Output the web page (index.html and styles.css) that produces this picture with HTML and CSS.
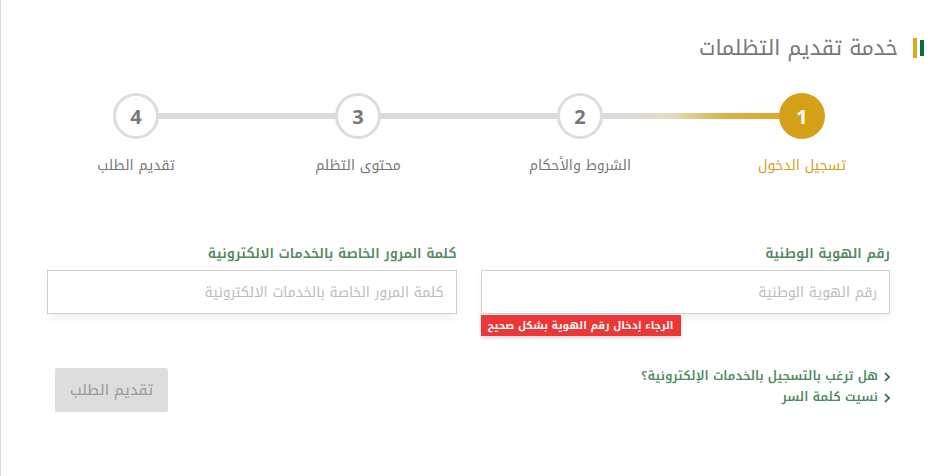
FILE: index.html
```html
<!DOCTYPE html>
<html lang="ar" dir="rtl">
<head>
<meta charset="utf-8">
<title>خدمة تقديم التظلمات</title>
<link rel="stylesheet" href="styles.css">
</head>
<body>
<div class="page">
  <div class="header">
    <span class="bar bar-green"></span>
    <span class="bar bar-gold"></span>
    <h1 class="title">خدمة تقديم التظلمات</h1>
  </div>

  <div class="steps">
    <div class="step step-active">
      <div class="circle">1</div>
      <div class="step-label">تسجيل الدخول</div>
    </div>
    <div class="step">
      <div class="circle">2</div>
      <div class="step-label">الشروط والأحكام</div>
    </div>
    <div class="step">
      <div class="circle">3</div>
      <div class="step-label">محتوى التظلم</div>
    </div>
    <div class="step step-last">
      <div class="circle">4</div>
      <div class="step-label">تقديم الطلب</div>
    </div>
  </div>

  <div class="form">
    <div class="field">
      <label class="field-label">رقم الهوية الوطنية</label>
      <div class="input-wrap">
        <input class="input" type="text" placeholder="رقم الهوية الوطنية">
        <div class="error">الرجاء إدخال رقم الهوية بشكل صحيح</div>
      </div>
    </div>
    <div class="field">
      <label class="field-label">كلمة المرور الخاصة بالخدمات الالكترونية</label>
      <div class="input-wrap">
        <input class="input" type="password" placeholder="كلمة المرور الخاصة بالخدمات الالكترونية">
      </div>
    </div>
  </div>

  <div class="actions">
    <div class="links">
      <a class="link" href="#"><svg class="chev" viewBox="0 0 6 10" width="6" height="10"><path d="M1 1 L5 5 L1 9" fill="none" stroke="currentColor" stroke-width="1.6"/></svg>هل ترغب بالتسجيل بالخدمات الإلكترونية؟</a>
      <a class="link" href="#"><svg class="chev" viewBox="0 0 6 10" width="6" height="10"><path d="M1 1 L5 5 L1 9" fill="none" stroke="currentColor" stroke-width="1.6"/></svg>نسيت كلمة السر</a>
    </div>
    <button class="submit" type="button">تقديم الطلب</button>
  </div>
</div>
</body>
</html>
```

FILE: styles.css
```css
* { box-sizing: border-box; }

html, body {
  margin: 0;
  padding: 0;
  background: #fff;
}

body {
  font-family: "Noto Kufi Arabic", "Noto Sans Arabic", "DejaVu Sans", sans-serif;
  border-left: 1px solid #dcdcdc;
  min-height: 476px;
  color: #777;
}

.page {
  padding: 38px 46px 0 46px;
}

.header {
  display: flex;
  align-items: center;
  height: 20px;
  margin-right: -34px;
}

.bar {
  display: block;
  width: 4px;
}

.bar-green {
  height: 16px;
  background: #0f6b3a;
}

.bar-gold {
  height: 20px;
  background: #d9aa1f;
  margin-right: 3px;
}

.title {
  margin: 0 15px 0 0;
  font-size: 21px;
  font-weight: normal;
  color: #777;
  line-height: 20px;
}

.steps {
  display: grid;
  grid-template-columns: repeat(4, 1fr);
  margin: 35px -23px 0 -22px;
}

.step {
  position: relative;
  display: flex;
  flex-direction: column;
  align-items: center;
}

.step::after {
  content: "";
  position: absolute;
  top: 20px;
  right: 50%;
  width: 100%;
  height: 6px;
  background: #dadada;
  z-index: 0;
}

.step-active::after {
  background: linear-gradient(to left, #d6a721 0%, #d9b24a 35%, #e6dcc0 60%, #dadada 80%);
}

.step-last::after {
  display: none;
}

.circle {
  position: relative;
  z-index: 1;
  width: 46px;
  height: 46px;
  border-radius: 50%;
  border: 3px solid #dcdcdc;
  background: #fff;
  color: #777;
  font-family: "Open Sans", "DejaVu Sans", sans-serif;
  font-weight: 700;
  font-size: 20px;
  display: flex;
  align-items: center;
  justify-content: center;
}

.step-active .circle {
  background: #d4a017;
  border-color: #d4a017;
  color: #fff;
}

.step-label {
  margin-top: 17px;
  font-size: 14px;
  line-height: 20px;
  color: #777;
}

.step-active .step-label {
  color: #d4a017;
}

.form {
  display: grid;
  grid-template-columns: 1fr 1fr;
  column-gap: 24px;
  margin-top: 68px;
}

.field {
  display: flex;
  flex-direction: column;
}

.field-label {
  font-size: 13.5px;
  line-height: 20px;
  color: #4f8a5f;
  font-weight: 600;
  margin-bottom: 6px;
}

.input-wrap {
  position: relative;
}

.input {
  display: block;
  width: 100%;
  height: 44px;
  border: 1px solid #d0d0d0;
  border-radius: 0;
  padding: 0 12px;
  font-family: inherit;
  font-size: 14px;
  color: #555;
  background: #fff;
  box-shadow: 0 4px 10px rgba(0, 0, 0, 0.06);
  outline: none;
}

.input::placeholder {
  color: #bdbdbd;
}

.error {
  position: absolute;
  left: 0;
  top: 45px;
  width: max-content;
  min-width: 200px;
  height: 21px;
  background: #ef3636;
  color: #fff;
  font-size: 10.5px;
  font-weight: 700;
  line-height: 21px;
  padding: 0 7px;
  white-space: nowrap;
  text-align: right;
  box-shadow: 0 2px 4px rgba(0, 0, 0, 0.15);
}

.actions {
  display: flex;
  justify-content: space-between;
  align-items: flex-start;
  margin-top: 52px;
}

.links {
  display: flex;
  flex-direction: column;
  gap: 0;
}

.link {
  display: flex;
  align-items: center;
  gap: 6px;
  font-size: 12.5px;
  line-height: 21px;
  height: 21px;
  font-weight: 600;
  color: #4f8a5f;
  text-decoration: none;
}

.chev {
  color: #2f5f3f;
  flex: none;
}

.submit {
  margin-top: 2px;
  margin-left: 8px;
  width: 113px;
  height: 44px;
  border: none;
  border-radius: 2px;
  background: #dddddd;
  color: #9a9a9a;
  font-family: inherit;
  font-size: 15px;
}
```
